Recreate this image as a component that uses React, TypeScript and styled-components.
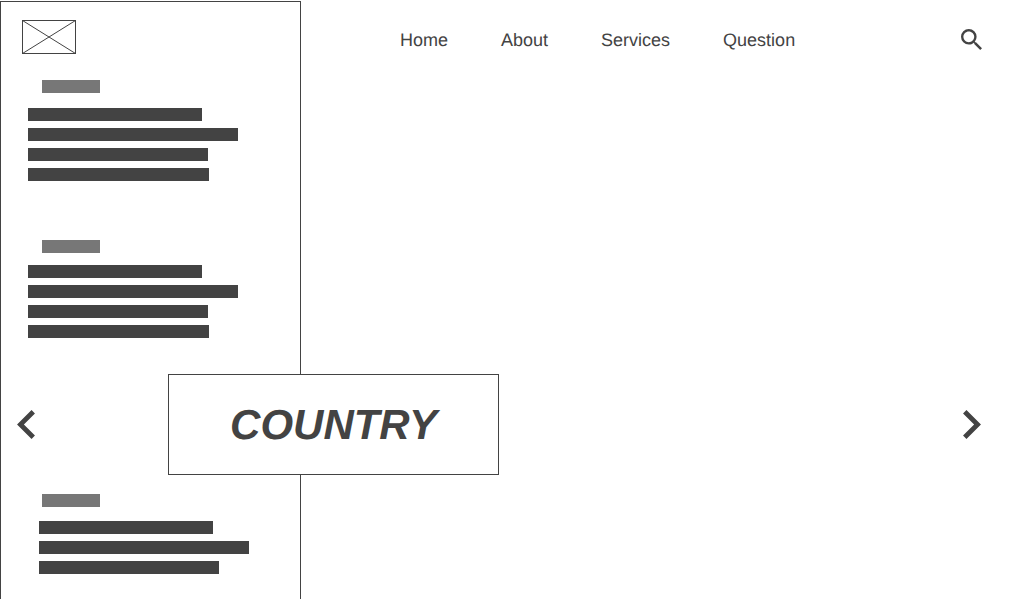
import React from "react";
import styled, { createGlobalStyle } from "styled-components";

const ink = "#434343";
const muted = "#777777";
const paper = "#ffffff";

const GlobalStyle = createGlobalStyle`
  *, *::before, *::after { box-sizing: border-box; }
  body {
    margin: 0;
    background: ${paper};
    color: ${ink};
    font-family: "Liberation Sans", Arial, sans-serif;
    text-rendering: geometricPrecision;
  }
`;

const Page = styled.div`
  position: relative;
  display: grid;
  grid-template-columns: 301px minmax(0, 1fr);
  min-height: 100vh;
  padding-top: 1px;
`;

const Sidebar = styled.aside`
  border: 1px solid ${ink};
  border-bottom: 0;
  padding: 18px 21px 24px;
`;

const Logo = styled.svg`
  display: block;
  width: 54px;
  height: 34px;
  margin-bottom: 26px;
  fill: none;
  stroke: ${ink};
`;

const Section = styled.section<{ $before?: number }>`
  margin-top: ${(p) => p.$before ?? 0}px;
`;

const Label = styled.div`
  width: 58px;
  height: 13px;
  margin-left: 20px;
  background: ${muted};
`;

const Lines = styled.div<{ $indent: number; $top: number }>`
  display: flex;
  flex-direction: column;
  gap: 7px;
  margin: ${(p) => p.$top}px 0 0 ${(p) => p.$indent}px;
`;

const Line = styled.div<{ $width: number }>`
  width: ${(p) => p.$width}px;
  height: 13px;
  background: ${ink};
`;

const Header = styled.header`
  display: flex;
  align-items: center;
  justify-content: space-between;
  height: 77px;
  padding: 0 42px 0 99px;
`;

const Nav = styled.nav`
  display: flex;
  gap: 53px;
`;

const NavLink = styled.a`
  color: inherit;
  font-size: 18px;
  line-height: 24px;
  text-decoration: none;
`;

const IconButton = styled.button`
  display: flex;
  padding: 0;
  border: 0;
  background: none;
  color: inherit;
  cursor: pointer;
`;

const Icon = styled.svg<{ $w: number; $h: number }>`
  display: block;
  width: ${(p) => p.$w}px;
  height: ${(p) => p.$h}px;
  fill: currentColor;
`;

const Carousel = styled.section`
  position: absolute;
  top: 374px;
  left: 0;
  right: 0;
  display: flex;
  align-items: center;
  padding: 0 43px 0 17px;
`;

const Title = styled.h1`
  width: 331px;
  margin: 0 auto 0 133px;
  padding: 26px 0 25px;
  border: 1px solid ${ink};
  background: ${paper};
  font-size: 42px;
  font-style: italic;
  font-weight: 700;
  line-height: 48px;
  text-align: center;
`;

const sections = [
  { before: 0, top: 15, indent: 6, lines: [174, 210, 180, 181] },
  { before: 59, top: 12, indent: 6, lines: [174, 210, 180, 181] },
  { before: 156, top: 14, indent: 17, lines: [174, 210, 180] },
];

const links = ["Home", "About", "Services", "Question"];

export default function App() {
  return (
    <>
      <GlobalStyle />
      <Page>
        <Sidebar>
          <Logo viewBox="0 0 54 34" role="img" aria-label="Logo">
            <rect x="0.5" y="0.5" width="53" height="33" />
            <path d="M0.5 0.5L53.5 33.5M53.5 0.5L0.5 33.5" />
          </Logo>
          {sections.map((s, i) => (
            <Section key={i} $before={s.before}>
              <Label />
              <Lines $indent={s.indent} $top={s.top}>
                {s.lines.map((w, j) => (
                  <Line key={j} $width={w} />
                ))}
              </Lines>
            </Section>
          ))}
        </Sidebar>
        <main>
          <Header>
            <Nav>
              {links.map((name) => (
                <NavLink key={name} href={`#${name.toLowerCase()}`}>
                  {name}
                </NavLink>
              ))}
            </Nav>
            <IconButton type="button" aria-label="Search">
              <Icon $w={21} $h={21} viewBox="3 3 17.49 17.49">
                <path d="M15.5 14h-.79l-.28-.27A6.471 6.471 0 0 0 16 9.5 6.5 6.5 0 1 0 9.5 16c1.61 0 3.09-.59 4.23-1.57l.27.28v.79l5 4.99L20.49 19l-4.99-5zm-6 0C7.01 14 5 11.99 5 9.5S7.01 5 9.5 5 14 7.01 14 9.5 11.99 14 9.5 14z" />
              </Icon>
            </IconButton>
          </Header>
        </main>
        <Carousel aria-label="Slides">
          <IconButton type="button" aria-label="Previous">
            <Icon $w={18} $h={29} viewBox="8 6 7.41 12">
              <path d="M15.41 7.41L14 6l-6 6 6 6 1.41-1.41L10.83 12z" />
            </Icon>
          </IconButton>
          <Title>COUNTRY</Title>
          <IconButton type="button" aria-label="Next">
            <Icon $w={18} $h={29} viewBox="8.59 6 7.41 12">
              <path d="M10 6L8.59 7.41 13.17 12l-4.58 4.59L10 18l6-6z" />
            </Icon>
          </IconButton>
        </Carousel>
      </Page>
    </>
  );
}
